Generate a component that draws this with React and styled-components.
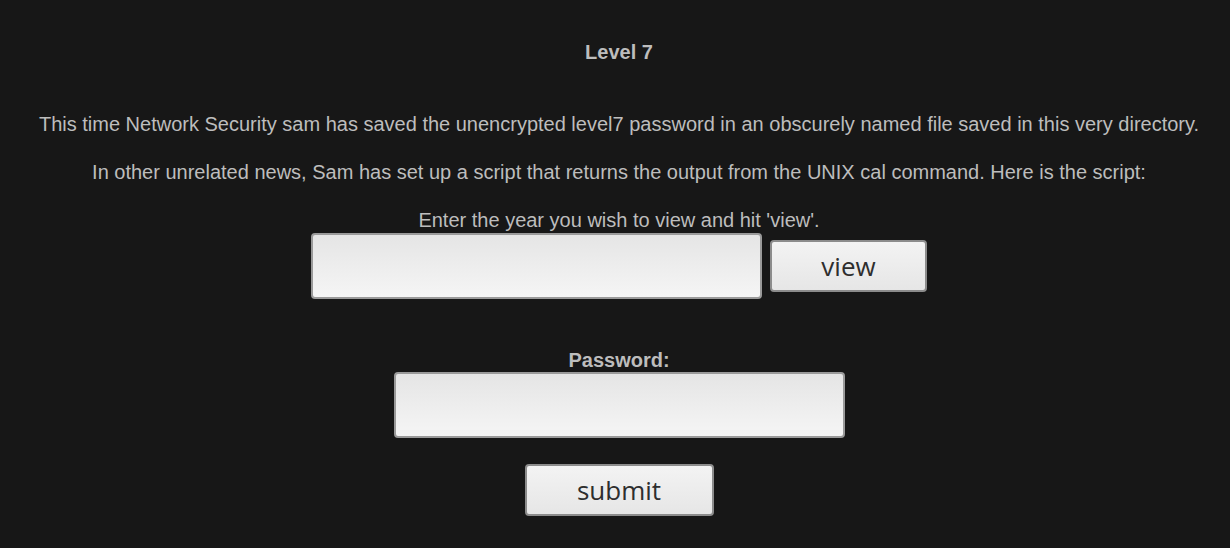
import React from 'react';
import styled, { createGlobalStyle } from 'styled-components';

const GlobalStyle = createGlobalStyle`
  html, body {
    margin: 0;
    padding: 0;
    background-color: #171717;
  }
`
const Page = styled.div`
  height: 548px;
  overflow: hidden;
  box-sizing: border-box;
  background-color: #171717;
  color: #bdbdbd;
  font-family: "Liberation Sans", Arial, sans-serif;
  font-size: 20px;
  text-align: center;
  padding: 38px 0 0 8px;
  display: flex;
  flex-direction: column;
  align-items: center;
`
const Title = styled.h1`
  font-size: 20px;
  font-weight: bold;
  margin: 0 0 44px 0;
  line-height: 28px;
`
const Text = styled.p`
  margin: 0 0 20px 0;
  line-height: 28px;
`
const Label = styled.div`
  line-height: ${p => (p.bold ? 24 : 28)}px;
  font-weight: ${p => (p.bold ? 'bold' : 'normal')};
`
const Row = styled.form`
  display: flex;
  align-items: center;
  justify-content: center;
  gap: 8px;
  margin-top: -1px;
`
const Field = styled.input`
  box-sizing: border-box;
  width: 451px;
  height: 66px;
  border: 2px solid #9a9a9a;
  border-radius: 4px;
  background: linear-gradient(#e5e5e5, #f5f5f5);
  outline: none;
  margin: 0;
`
const Button = styled.button`
  box-sizing: border-box;
  width: ${p => p.w}px;
  height: ${p => p.h}px;
  border: 2px solid #8c8c8c;
  border-radius: 4px;
  background: linear-gradient(#f3f3f3, #e6e6e6);
  color: #2e2e2e;
  font-family: "Open Sans", "Noto Sans", sans-serif;
  font-size: 26px;
  padding: 0;
  cursor: pointer;
`
const PasswordBlock = styled.div`
  margin-top: 49px;
  display: flex;
  flex-direction: column;
  align-items: center;
`
const Submit = styled.div`
  margin-top: 26px;
`

function App() {
  return (
    <Page>
      <GlobalStyle />
      <Title>Level 7</Title>
      <Text>
        This time Network Security sam has saved the unencrypted level7 password in an obscurely named file saved in this very directory.
      </Text>
      <Text>
        In other unrelated news, Sam has set up a script that returns the output from the UNIX cal command. Here is the script:
      </Text>
      <Label>Enter the year you wish to view and hit 'view'.</Label>
      <Row>
        <Field type="text" />
        <Button w={157} h={52}>view</Button>
      </Row>
      <PasswordBlock>
        <Label bold>Password:</Label>
        <Field type="password" />
        <Submit>
          <Button w={189} h={52}>submit</Button>
        </Submit>
      </PasswordBlock>
    </Page>
  );
}

export default App;
